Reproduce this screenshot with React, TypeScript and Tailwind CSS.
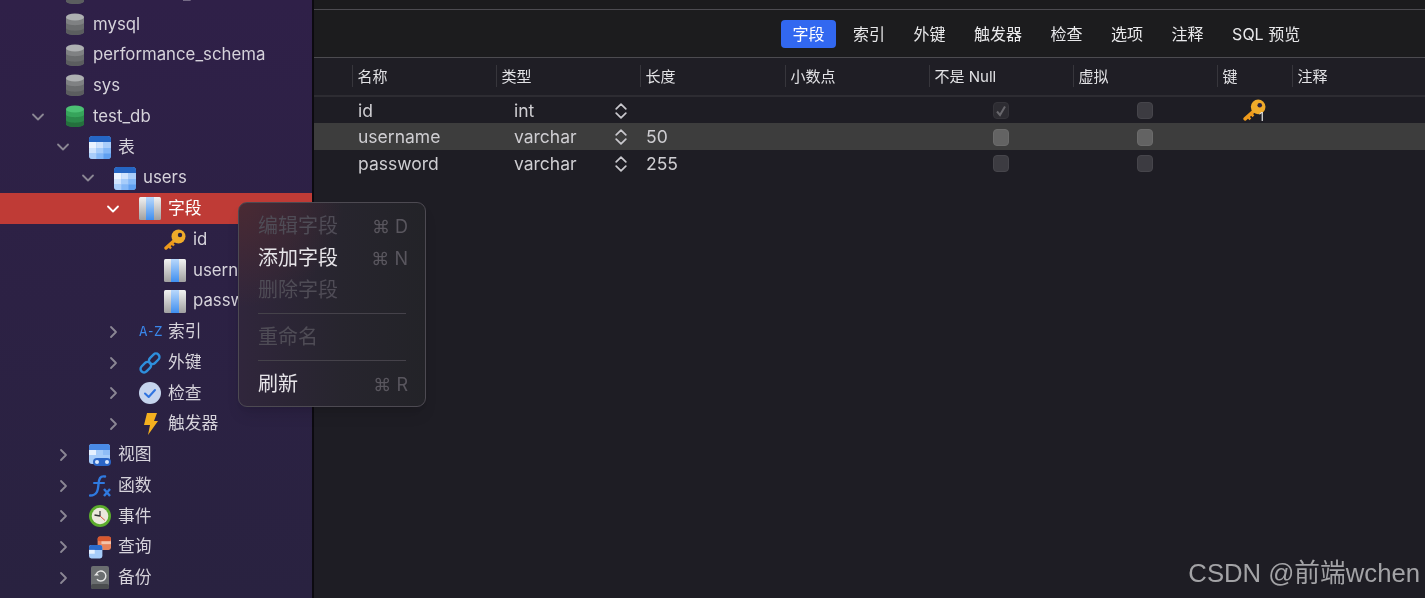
import React from "react";

const Chevron = ({ open, white }: { open: boolean; white?: boolean }) => (
  <svg width="22" height="16" viewBox="0 0 22 16" fill="none" stroke={white ? "#ffffff" : "#8b8794"} strokeWidth="1.8" strokeLinecap="round" strokeLinejoin="round">
    {open ? <path d="M6 5.5 L11 10.5 L16 5.5" /> : <path d="M9 3 L14 8 L9 13" />}
  </svg>
);

const Db = ({ c }: { c: [string, string, string, string] }) => (
  <svg width="20" height="23" viewBox="0 0 20 23">
    <path d="M1 4 V19 C1 23 19 23 19 19 V4 Z" fill={c[2]} />
    <path d="M1 4 V9.5 C1 13 19 13 19 9.5 V4 Z" fill={c[1]} />
    <path d="M1 15 V19 C1 23 19 23 19 19 V15 C19 18.5 1 18.5 1 15 Z" fill={c[3]} />
    <ellipse cx="10" cy="4" rx="9" ry="3.6" fill={c[0]} />
  </svg>
);
const GRAY: [string, string, string, string] = ["#aeb0b2", "#7f8183", "#6a6c6e", "#5b5d5f"];
const GREEN: [string, string, string, string] = ["#4cc074", "#36a45b", "#2b8a4b", "#24703d"];

const TableIcon = () => (
  <svg width="22" height="23" viewBox="0 0 22 23">
    <rect x="0" y="0" width="22" height="23" rx="3.5" fill="#83b7f7" />
    <path d="M0 6 V3.5 A3.5 3.5 0 0 1 3.5 0 H18.5 A3.5 3.5 0 0 1 22 3.5 V6 Z" fill="#2566c4" />
    <rect x="0" y="6" width="7.5" height="6" fill="#eaf3ff" />
    <rect x="7.5" y="6" width="7" height="6" fill="#cfe3fd" />
    <rect x="14.5" y="6" width="7.5" height="6" fill="#a9cdfa" />
    <rect x="0" y="12" width="7.5" height="5.5" fill="#cfe3fd" />
    <rect x="7.5" y="12" width="7" height="5.5" fill="#a6ccfa" />
    <rect x="14.5" y="12" width="7.5" height="5.5" fill="#83b7f7" />
    <path d="M0 17.5 H7.5 V23 H3.5 A3.5 3.5 0 0 1 0 19.5 Z" fill="#a9cdfa" />
    <rect x="7.5" y="17.5" width="7" height="5.5" fill="#83b7f7" />
    <path d="M14.5 17.5 H22 V19.5 A3.5 3.5 0 0 1 18.5 23 H14.5 Z" fill="#5f9ff0" />
  </svg>
);

const FieldIcon = () => (
  <svg width="22" height="23" viewBox="0 0 22 23">
    <defs>
      <linearGradient id="fg" x1="0" y1="0" x2="0" y2="1">
        <stop offset="0" stopColor="#f2f2f2" />
        <stop offset="1" stopColor="#a0a0a0" />
      </linearGradient>
      <linearGradient id="fb" x1="0" y1="0" x2="0" y2="1">
        <stop offset="0" stopColor="#b9d8fb" />
        <stop offset="1" stopColor="#3f8ff0" />
      </linearGradient>
    </defs>
    <rect x="0" y="0" width="22" height="23" rx="1.5" fill="url(#fg)" />
    <rect x="7" y="0" width="8" height="23" fill="url(#fb)" />
  </svg>
);

const KeyIcon = ({ size = 22 }: { size?: number }) => (
  <svg width={size} height={size} viewBox="0 0 22 22">
    <path d="M12 10 L2 19" stroke="#ee9a1c" strokeWidth="3.4" strokeLinecap="round" fill="none" />
    <path d="M4.5 16.5 L7 19.5 M7.5 14 L10 16.5" stroke="#ee9a1c" strokeWidth="2.4" fill="none" />
    <circle cx="14.5" cy="7.5" r="7" fill="#f0ab2a" />
    <circle cx="16" cy="6" r="2.2" fill="#2b2140" />
  </svg>
);

const AZ = () => (
  <span className="w-[22px] text-[14px] tracking-[-1px] text-[#3a86ea] font-['DejaVu_Sans_Mono',monospace] whitespace-nowrap">A-Z</span>
);

const LinkIcon = () => (
  <svg width="22" height="22" viewBox="0 0 22 22" fill="none" stroke="#2e8fdc" strokeWidth="2.4">
    <rect x="-6" y="-3.5" width="12" height="7" rx="3.5" transform="translate(6.8 15.2) rotate(-45)" />
    <rect x="-6" y="-3.5" width="12" height="7" rx="3.5" transform="translate(15.2 6.8) rotate(-45)" />
  </svg>
);

const CheckIcon = () => (
  <svg width="22" height="22" viewBox="0 0 22 22">
    <circle cx="11" cy="11" r="11" fill="#c6d5ee" />
    <path d="M6 11.5 L9.7 15 L16 8" stroke="#2f74e0" strokeWidth="2" strokeLinecap="round" strokeLinejoin="round" fill="none" />
  </svg>
);

const BoltIcon = () => (
  <svg width="22" height="24" viewBox="0 0 22 24">
    <path d="M8 1 H18 L15 9 H19 L9 23 L11 13 H5 Z" fill="#f4b01f" />
  </svg>
);

const ViewIcon = () => (
  <svg width="22" height="22" viewBox="0 0 22 22">
    <rect x="0" y="0" width="21" height="20" rx="3" fill="#a6ccfa" />
    <path d="M0 6 V3 A3 3 0 0 1 3 0 H18 A3 3 0 0 1 21 3 V6 Z" fill="#4a8be6" />
    <rect x="0" y="6" width="7" height="5" fill="#e6f1ff" />
    <rect x="14" y="6" width="7" height="5" fill="#8fbdf7" />
    <rect x="4" y="14" width="18" height="8" rx="4" fill="#2b66c7" />
    <circle cx="8" cy="18" r="2" fill="#d9e8fc" />
    <circle cx="18" cy="18" r="2" fill="#d9e8fc" />
  </svg>
);

const FxIcon = () => (
  <svg width="22" height="22" viewBox="0 0 22 22" fill="none" stroke="#2f7ae0">
    <path d="M16 1.5 C11 0.5 10 4 9.5 9 C9 15 8.5 20.5 1 20.5" strokeWidth="2.4" strokeLinecap="round" />
    <path d="M5 8 H15" strokeWidth="2" strokeLinecap="round" />
    <path d="M15 14 L21 21 M21 14 L15 21" strokeWidth="2.4" />
  </svg>
);

const ClockIcon = () => (
  <svg width="22" height="22" viewBox="0 0 22 22">
    <circle cx="11" cy="11" r="11" fill="#5cac2c" />
    <circle cx="11" cy="11" r="8.3" fill="#ece8dc" />
    <path d="M11 11 L5.5 10" stroke="#333" strokeWidth="1.4" />
    <path d="M11 11 L11 6" stroke="#333" strokeWidth="1.2" />
    <path d="M11 11 L16 15.5" stroke="#d5573b" strokeWidth="1" />
  </svg>
);

const QueryIcon = () => (
  <svg width="23" height="23" viewBox="0 0 23 23">
    <rect x="9" y="0" width="14" height="14" rx="2.5" fill="#e8825a" />
    <rect x="9" y="0" width="14" height="5" rx="2.5" fill="#d9582f" />
    <rect x="13" y="5" width="10" height="3" fill="#f5c4ab" />
    <rect x="0" y="9" width="14" height="14" rx="2.5" fill="#a6ccfa" />
    <path d="M0 14 V11.5 A2.5 2.5 0 0 1 2.5 9 H11.5 A2.5 2.5 0 0 1 14 11.5 V14 Z" fill="#2a6bcc" />
    <rect x="0" y="14" width="6" height="4" fill="#e6f1ff" />
  </svg>
);

const BackupIcon = () => (
  <svg width="20" height="23" viewBox="0 0 20 23">
    <rect x="1" y="0" width="18" height="23" rx="2" fill="#6b6e70" />
    <rect x="1" y="18" width="18" height="5" rx="2" fill="#4b4d4f" />
    <path d="M6.5 7.5 A5 5 0 1 1 7 13.2" stroke="#e8e8e8" strokeWidth="1.4" fill="none" />
    <path d="M4 7.5 H9 L6.5 10.2 Z" fill="#e8e8e8" transform="rotate(180 6.5 8.5)" />
  </svg>
);

type Row = { pad: string; open?: boolean; noChevron?: boolean; icon: React.ReactNode; label: string; sel?: boolean };

const tree: Row[] = [
  { pad: "pl-[27px]", noChevron: true, icon: <Db c={GRAY} />, label: "information_schema" },
  { pad: "pl-[27px]", noChevron: true, icon: <Db c={GRAY} />, label: "mysql" },
  { pad: "pl-[27px]", noChevron: true, icon: <Db c={GRAY} />, label: "performance_schema" },
  { pad: "pl-[27px]", noChevron: true, icon: <Db c={GRAY} />, label: "sys" },
  { pad: "pl-[27px]", open: true, icon: <Db c={GREEN} />, label: "test_db" },
  { pad: "pl-[52px]", open: true, icon: <TableIcon />, label: "表" },
  { pad: "pl-[77px]", open: true, icon: <TableIcon />, label: "users" },
  { pad: "pl-[102px]", open: true, icon: <FieldIcon />, label: "字段", sel: true },
  { pad: "pl-[127px]", noChevron: true, icon: <KeyIcon />, label: "id" },
  { pad: "pl-[127px]", noChevron: true, icon: <FieldIcon />, label: "username" },
  { pad: "pl-[127px]", noChevron: true, icon: <FieldIcon />, label: "password" },
  { pad: "pl-[102px]", icon: <AZ />, label: "索引" },
  { pad: "pl-[102px]", icon: <LinkIcon />, label: "外键" },
  { pad: "pl-[102px]", icon: <CheckIcon />, label: "检查" },
  { pad: "pl-[102px]", icon: <BoltIcon />, label: "触发器" },
  { pad: "pl-[52px]", icon: <ViewIcon />, label: "视图" },
  { pad: "pl-[52px]", icon: <FxIcon />, label: "函数" },
  { pad: "pl-[52px]", icon: <ClockIcon />, label: "事件" },
  { pad: "pl-[52px]", icon: <QueryIcon />, label: "查询" },
  { pad: "pl-[52px]", icon: <BackupIcon />, label: "备份" },
];

const TreeRow = ({ r }: { r: Row }) => (
  <div className={`flex h-[30.75px] shrink-0 items-center ${r.pad} ${r.sel ? "bg-[#bf3b36] text-[#ffffff]" : "text-[#d6d3db]"}`}>
    <div className="flex w-[22px] shrink-0 justify-center">{!r.noChevron && <Chevron open={!!r.open} white={r.sel} />}</div>
    <div className="ml-[15px] flex w-[22px] shrink-0 items-center justify-center">{r.icon}</div>
    <span className="ml-[7px] whitespace-nowrap text-[16.8px]">{r.label}</span>
  </div>
);

const tabs = ["字段", "索引", "外键", "触发器", "检查", "选项", "注释", "SQL 预览"];
const columns = ["名称", "类型", "长度", "小数点", "不是 Null", "虚拟", "键", "注释"];
const GRID = "grid grid-cols-[38px_144px_144px_145px_144px_144px_144px_75px_1fr]";

const Stepper = () => (
  <svg width="12" height="18" viewBox="0 0 12 18" fill="none" stroke="#c9c8cd" strokeWidth="1.7" strokeLinecap="round" strokeLinejoin="round">
    <path d="M1.2 6.8 L6 2.2 L10.8 6.8" />
    <path d="M1.2 11.2 L6 15.8 L10.8 11.2" />
  </svg>
);

const Check = ({ checked, hi }: { checked?: boolean; hi?: boolean }) => (
  <div className={`flex h-[17px] w-[16px] items-center justify-center rounded-[4px] border ${hi ? "border-[#6b6b6b] bg-[#636363]" : checked ? "border-[#35343a] bg-[#2d2c32]" : "border-[#46454b] bg-[#3c3b41]"}`}>
    {checked && (
      <svg width="12" height="12" viewBox="0 0 12 12" fill="none" stroke="#68676c" strokeWidth="2">
        <path d="M2 6.5 L5 10 L10 1.5" />
      </svg>
    )}
  </div>
);

const rows = [
  { name: "id", type: "int", len: "", checked: true, key: true },
  { name: "username", type: "varchar", len: "50", hi: true },
  { name: "password", type: "varchar", len: "255" },
];

const MenuItem = ({ label, sc, off }: { label: string; sc?: string; off?: boolean }) => (
  <div className="flex h-[32px] items-center justify-between pl-[19px] pr-[17px]">
    <span className={`text-[20px] ${off ? "text-[#4f4c56]" : "text-[#e6e4e8]"}`}>{label}</span>
    {sc && <span className="text-[18px] text-[#59565e] font-['Inter','DejaVu_Sans',sans-serif]">{sc}</span>}
  </div>
);

export default function App() {
  return (
    <div className="relative flex h-[598px] w-[1425px] overflow-hidden bg-[#1e1d24] blur-[0.35px] font-['Inter','Noto_Sans_CJK_SC',sans-serif]">
      <aside className="flex h-full w-[314px] shrink-0 flex-col overflow-hidden border-r-2 border-[#0c0a10] bg-gradient-to-b from-[#2f2048] to-[#292240]">
        <div className="-mt-[21.8px] flex flex-col">
          {tree.map((r) => (
            <TreeRow key={r.label + r.pad} r={r} />
          ))}
        </div>
      </aside>

      <main className="flex min-w-0 flex-1 flex-col">
        <div className="h-[9px] bg-[#1b1b1d]" />
        <div className="flex h-[49px] items-center gap-[5.5px] border-y border-y-[#4c4b50] bg-[#1c1c1e] pl-[467px] text-[16px] text-[#e9e9eb]">
          {tabs.map((t, i) => (
            <div key={t} className={`flex h-[28px] items-center rounded-[4px] px-[11.5px] ${i === 0 ? "bg-[#3268f0] text-[#ffffff]" : ""}`}>
              {t}
            </div>
          ))}
        </div>
        <div className={`${GRID} h-[38.5px] items-center border-b-2 border-b-[#2d2c32] bg-[#1f1e25] text-[15px] text-[#e2e2e5]`}>
          <div />
          {columns.map((c, i) => (
            <div key={c + i} className="flex h-[22px] items-center border-l border-[#37363c] pl-[4.5px] pt-[2px] whitespace-nowrap">
              {c}
            </div>
          ))}
        </div>
        {rows.map((r) => (
          <div key={r.name} className={`${GRID} h-[26.67px] items-center text-[17.5px] text-[#cfced2] ${r.hi ? "bg-[#3d3d3d]" : ""}`}>
            <div />
            <div className="pl-[6px] pt-[1px]">{r.name}</div>
            <div className="flex items-center justify-between pl-[18px] pr-[13px] pt-[1px]">
              <span>{r.type}</span>
              <Stepper />
            </div>
            <div className="pl-[6px] pt-[1px]">{r.len}</div>
            <div />
            <div className="flex justify-center pt-[1px]">
              <Check checked={r.checked} hi={r.hi} />
            </div>
            <div className="flex justify-center pt-[1px]">
              <Check hi={r.hi} />
            </div>
            <div className="flex justify-center">
              {r.key && (
                <div className="relative">
                  <KeyIcon size={23} />
                  <span className="absolute -bottom-[1px] right-[2px] text-[12px] leading-none text-[#e8e8e8]">1</span>
                </div>
              )}
            </div>
            <div />
          </div>
        ))}
      </main>

      <div className="absolute left-[238px] top-[202px] flex h-[205px] w-[188px] flex-col rounded-[9px] border border-[#4d4a52] bg-[radial-gradient(circle_at_0%_0%,#4a2a33_0%,transparent_38%),linear-gradient(90deg,#30263c_0%,#27252e_55%,#232328_100%)] pt-[7px] shadow-lg">
        <MenuItem label="编辑字段" sc="⌘ D" off />
        <MenuItem label="添加字段" sc="⌘ N" />
        <MenuItem label="删除字段" off />
        <div className="mx-[19px] my-[7px] h-px bg-[#45424a]" />
        <MenuItem label="重命名" off />
        <div className="mx-[19px] my-[7px] h-px bg-[#45424a]" />
        <MenuItem label="刷新" sc="⌘ R" />
      </div>

      <div className="absolute bottom-[9px] right-[5px] whitespace-nowrap text-[25.7px] leading-[32px] text-[#a3a3a6] font-['Liberation_Sans','Noto_Sans_CJK_SC',sans-serif]">
        CSDN @前端wchen
      </div>
    </div>
  );
}
